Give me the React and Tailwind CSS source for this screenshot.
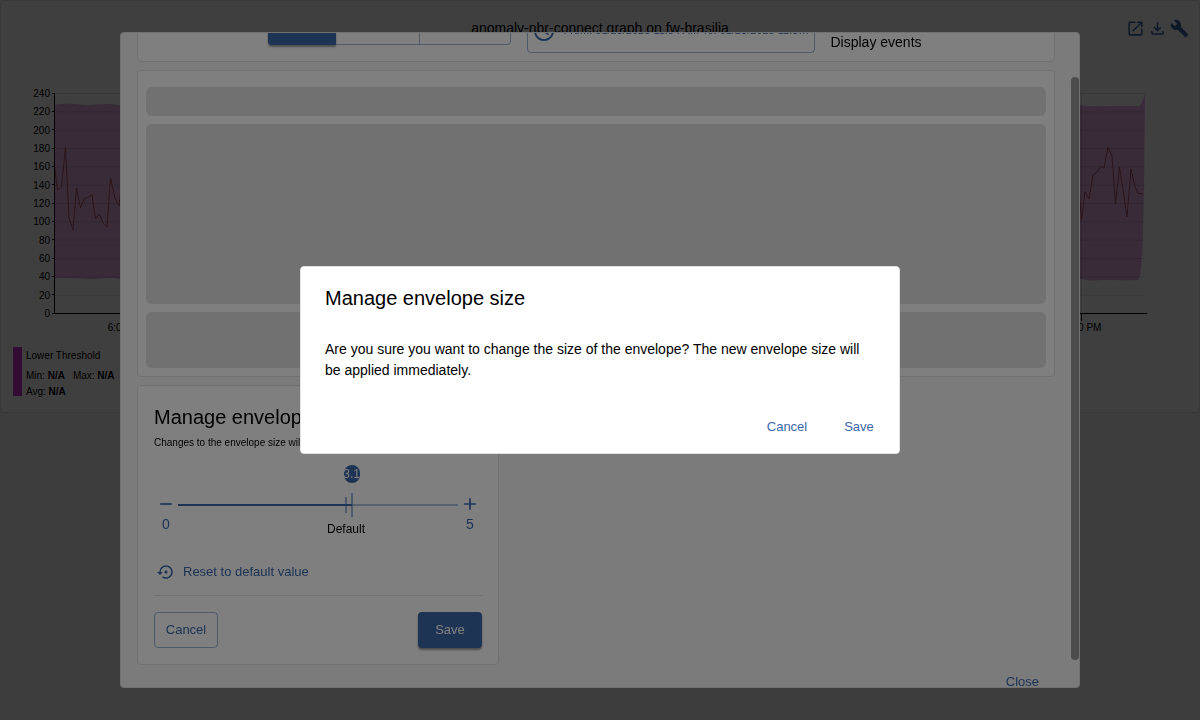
import { useState } from "react";
import {
  MdOutlineOpenInNew,
  MdOutlineFileDownload,
  MdBuild,
  MdAccessTime,
  MdAdd,
  MdRemove,
  MdSettingsBackupRestore,
} from "react-icons/md";

const TICKS = [240, 220, 200, 180, 160, 140, 120, 100, 80, 60, 40, 20, 0];
const tickY = (value) => 313.5 - (value * 220) / 240;

const AREA =
  "M54 105 C65 103 75 104 85 105 C95 105 105 103 120 105 L1080 105 C1090 107 1100 106 1110 106 H1138 C1142 106 1143 100 1145 94 L1144 190 C1143 240 1142 280 1138 280 C1120 281 1110 279 1095 280.5 C1088 281 1084 279 1080 279 L120 279 C108 277 102 279 92 279 C80 279 70 278 54 278 Z";

const SERIES =
  "54,162 57.5,190 61.5,187 65.5,147 69,218 73,230 76.500,188 80.500,208 84,199 92,195 95.500,219 99.500,214 103,223 107,227 110.500,178 115,198 119,206 122,180 300,200 600,170 900,210 1077,160 1081.500,221 1085,192 1089,199 1093,175 1097,172 1101,166 1104,168 1108,147 1112,156 1115.500,204 1119.500,167 1123,190 1127,217 1131,169 1135,187 1138.500,193.500 1142.500,193.500";

function Chart() {
  return (
    <svg viewBox="1 41 1198 298" className="block h-auto w-full" role="img" aria-label="Anomaly detection chart">
      <path d={AREA} fill="#e4b1e2" />
      {TICKS.map((t) => (
        <g key={t}>
          <line x1="55" x2="1145" y1={tickY(t)} y2={tickY(t)} stroke="#000000" strokeOpacity="0.12" />
          <line x1="52" x2="55" y1={Math.round(tickY(t)) - 0.5} y2={Math.round(tickY(t)) - 0.5} stroke="#000000" />
          <text x="50" y={tickY(t) + 3.5} textAnchor="end" fontSize="10" fill="#000000">
            {t}
          </text>
        </g>
      ))}
      <line x1="1081.5" x2="1081.5" y1="93" y2="313" stroke="#000000" strokeOpacity="0.12" />
      <polyline points={SERIES} fill="none" stroke="#ac5066" strokeWidth="1" />
      <line x1="54.5" x2="54.5" y1="93" y2="314" stroke="#000000" />
      <line x1="54" x2="1147" y1="313.5" y2="313.5" stroke="#000000" />
      <line x1="1081.5" x2="1081.5" y1="313" y2="321" stroke="#000000" />
      <text x="126" y="331" textAnchor="middle" fontSize="10">6:00 AM</text>
      <text x="1080" y="331" textAnchor="middle" fontSize="10">12:00 PM</text>
    </svg>
  );
}

function GraphPanel() {
  const icon = "size-[19px] text-[#3b68aa]";
  return (
    <section className="rounded border border-[#e3e3e3] bg-white pb-4">
      <header className="grid grid-cols-[1fr_auto_1fr] items-center pt-[15px] pb-px">
        <h1 className="col-start-2 text-sm leading-6">anomaly-nbr-connect graph on fw-brasilia</h1>
        <div className="flex justify-end gap-[3px] pr-[10px]">
          <button type="button" aria-label="Open in new tab"><MdOutlineOpenInNew className={icon} /></button>
          <button type="button" aria-label="Export"><MdOutlineFileDownload className={icon} /></button>
          <button type="button" aria-label="Configure"><MdBuild className={icon} /></button>
        </div>
      </header>
      <Chart />
      <div className="mt-2 flex h-[49px] gap-1 px-3 text-[10px] leading-4">
        <span className="w-[9px] bg-[#cc33cc]" />
        <div className="pt-px">
          <p>Lower Threshold</p>
          <p className="mt-1 flex gap-2">
            <span>Min: <b>N/A</b></span>
            <span>Max: <b>N/A</b></span>
          </p>
          <p>Avg: <b>N/A</b></p>
        </div>
      </div>
    </section>
  );
}

function EnvelopeSlider() {
  const [value, setValue] = useState(3.1);
  const position = { left: `${(value / 5) * 100}%` };
  return (
    <div className="mt-[41px] grid grid-cols-[24px_1fr_24px] text-[#3b68aa]">
      <div className="flex flex-col items-center">
        <button type="button" aria-label="Decrease" onClick={() => setValue(Math.max(0, value - 0.1))}>
          <MdRemove className="size-6 p-0.5" />
        </button>
        <span className="text-sm leading-4">0</span>
      </div>
      <div className="relative flex h-[26px] items-center">
        <span className="h-0.5 w-full bg-[#3b68aa]/40" />
        <span className="absolute left-0 h-0.5 bg-[#3b68aa]" style={{ width: `${(value / 5) * 100}%` }} />
        <span className="absolute left-[60%] h-4 w-px -translate-x-1/2 bg-[#3b68aa]" />
        <span className="absolute top-[29px] left-[60%] -translate-x-1/2 text-xs leading-4 text-black">Default</span>
        <span className="absolute h-6 w-0.5 -translate-x-1/2 bg-[#3b68aa]/50" style={position} />
        <span
          className="absolute -top-[27px] flex h-[18px] w-4 -translate-x-1/2 items-center justify-center rounded-full bg-[#3b68aa] text-xs leading-4 text-white"
          style={position}
        >
          {value.toFixed(1)}
        </span>
        <input
          type="range"
          min="0"
          max="5"
          step="0.1"
          value={value}
          onChange={(e) => setValue(Number(e.target.value))}
          aria-label="Envelope size"
          className="absolute inset-0 w-full cursor-pointer opacity-0"
        />
      </div>
      <div className="flex flex-col items-center">
        <button type="button" aria-label="Increase" onClick={() => setValue(Math.min(5, value + 0.1))}>
          <MdAdd className="size-6 p-0.5" />
        </button>
        <span className="text-sm leading-4">5</span>
      </div>
    </div>
  );
}

function GraphDialog() {
  const card = "rounded border border-[#e3e3e3] bg-white";
  return (
    <div className="fixed inset-0 flex justify-center bg-black/50 py-8">
      <div role="dialog" aria-label="Edit anomaly detection data" className="flex w-4/5 overflow-hidden rounded border border-[#e3e3e3] bg-[#f6f6f6]">
        <div className="flex min-w-0 flex-1 flex-col gap-2 px-4">
          <div className={`${card} -mt-[33px] flex h-[62px] shrink-0 items-start justify-center gap-4 pt-2 text-[13px] text-[#3b68aa]`}>
            <div className="flex h-9">
              <button type="button" className="w-[68px] rounded-l bg-[#3b68aa] pb-2 text-white shadow-[0_2px_2px_rgba(0,0,0,0.4)]">1 day</button>
              <button type="button" className="w-[84px] border-r border-b border-[#3b68aa]/50 pb-2">7 days</button>
              <button type="button" className="w-[91px] rounded-r border-r border-b border-[#3b68aa]/50 pb-2">31 days</button>
            </div>
            <button type="button" className="flex h-11 w-[288px] items-center gap-2 rounded border border-[#3b68aa]/50 px-1 whitespace-nowrap">
              <MdAccessTime className="size-6 shrink-0" />
              <span className="truncate pb-0.5 text-[11px] leading-4">From: 01/28/2025 11:54 AM To: 01/28/2025 11:54 PM</span>
            </button>
            <label className="flex w-[94px] flex-col text-sm leading-6 whitespace-nowrap text-black">
              <input type="checkbox" className="mt-px mb-1 size-4" />
              Display events
            </label>
          </div>
          <div className={`${card} flex shrink-0 flex-col gap-2 px-2 pt-4 pb-2`}>
            <div className="h-[29px] rounded-md bg-[#e3e3e3]" />
            <div className="h-[180px] rounded-md bg-[#e3e3e3]" />
            <div className="h-14 rounded-md bg-[#e3e3e3]" />
          </div>
          <div className={`${card} w-[362px] shrink-0 px-4 pt-[15px] pb-4`}>
            <h2 className="text-xl leading-8">Manage envelope size</h2>
            <p className="mt-0.5 truncate text-[10px] leading-4">Changes to the envelope size will be applied immediately</p>
            <EnvelopeSlider />
            <button type="button" className="mt-6 flex h-8 items-center gap-2 px-[3px] text-[13px] text-[#3b68aa]">
              <MdSettingsBackupRestore className="size-[18px]" />
              Reset to default value
            </button>
            <div className="mt-[7px] flex justify-between border-t border-[#e3e3e3] pt-4 text-[13px]">
              <button type="button" className="h-9 w-16 rounded border border-[#3b68aa]/50 text-[#3b68aa]">Cancel</button>
              <button type="button" className="h-9 w-16 rounded bg-[#3b68aa] text-white shadow-[0_2px_2px_rgba(0,0,0,0.4)]">Save</button>
            </div>
          </div>
          <footer className="-mt-2 flex shrink-0 justify-end">
            <button type="button" className="h-[34px] px-4 text-[13px] text-[#3b68aa]">Close</button>
          </footer>
        </div>
        <div className="flex w-2 flex-col pt-11 pb-[27px]">
          <div className="flex-1 rounded-full bg-[#999999]" />
        </div>
      </div>
    </div>
  );
}

function ConfirmDialog() {
  return (
    <div className="fixed inset-0 flex items-center justify-center bg-black/50">
      <div role="dialog" aria-modal="true" aria-labelledby="confirm-title" className="w-full max-w-[600px] rounded border border-[#e3e3e3] bg-white">
        <h2 id="confirm-title" className="px-6 pt-[15px] pb-px text-xl leading-8">Manage envelope size</h2>
        <p className="px-6 pt-6 pb-7 text-sm leading-[21px]">
          Are you sure you want to change the size of the envelope? The new envelope size will be applied immediately.
        </p>
        <div className="flex justify-end gap-2 px-2 pb-2 text-[13px] text-[#3b68aa]">
          <button type="button" className="h-9 w-16">Cancel</button>
          <button type="button" className="h-9 w-16">Save</button>
        </div>
      </div>
    </div>
  );
}

export default function App() {
  return (
    <main className="min-h-screen bg-[#f6f6f6] font-['Liberation_Sans',Arial,sans-serif] text-black">
      <GraphPanel />
      <GraphDialog />
      <ConfirmDialog />
    </main>
  );
}
